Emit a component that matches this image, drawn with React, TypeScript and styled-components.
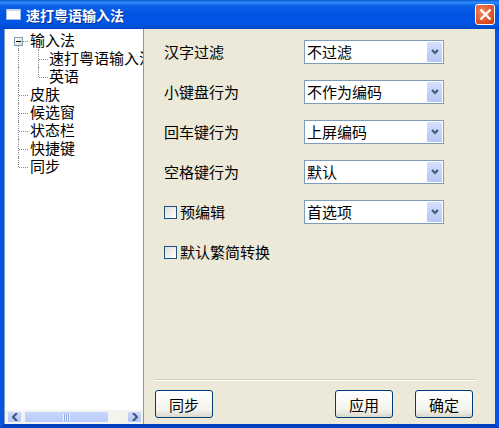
import styled, { createGlobalStyle } from "styled-components";

const GlobalStyle = createGlobalStyle`
    html, body {
        margin: 0;
        padding: 0;
        background: #fff;
    }
    * {
        box-sizing: border-box;
    }
`;

const FONT = `"Noto Sans CJK SC", "Liberation Sans", sans-serif`;

const treeItems = [
    { label: "输入法", level: 0, expander: true, last: false },
    { label: "速打粤语输入法", level: 1, last: false },
    { label: "英语", level: 1, last: true },
    { label: "皮肤", level: 0, last: false },
    { label: "候选窗", level: 0, last: false },
    { label: "状态栏", level: 0, last: false },
    { label: "快捷键", level: 0, last: false },
    { label: "同步", level: 0, last: true },
];

const selectRows = [
    { label: "汉字过滤", value: "不过滤" },
    { label: "小键盘行为", value: "不作为编码" },
    { label: "回车键行为", value: "上屏编码" },
    { label: "空格键行为", value: "默认" },
    { label: "预编辑", value: "首选项", check: true },
];

const Chevron = ({ dir }: { dir: "down" | "left" | "right" }) => {
    const points = {
        down: "1,1 4,4 7,1",
        left: "5,0 1,4 5,8",
        right: "1,0 5,4 1,8",
    }[dir];
    const size = dir === "down" ? { width: 8, height: 6 } : { width: 6, height: 8 };
    return (
        <svg {...size} viewBox={`0 0 ${size.width} ${size.height}`}>
            <polyline points={points} fill="none" stroke="#45587e" strokeWidth="2.2" />
        </svg>
    );
};

const App = () => {
    return (
        <>
            <GlobalStyle />
            <Window>
                <TitleBar>
                    <TitleIcon />
                    <TitleText>速打粤语输入法</TitleText>
                    <CloseButton aria-label="close">
                        <svg width="13" height="13" viewBox="0 0 13 13">
                            <path d="M1.5 1.5 L11.5 11.5 M11.5 1.5 L1.5 11.5" stroke="#fff" strokeWidth="2.4" />
                        </svg>
                    </CloseButton>
                </TitleBar>
                <Body>
                    <TreePane>
                        <TreeList>
                            {treeItems.map((item, i) => (
                                <TreeRow key={item.label} $level={item.level}>
                                    {/* 주 세로선: 첫 행은 가운데부터, 마지막 행은 가운데까지 */}
                                    <VLine
                                        $left={13}
                                        $top={i === 0 ? 10 : 0}
                                        $height={i === 0 ? 8 : item.level === 0 && item.last ? 10 : 18}
                                    />
                                    {item.level === 1 && (
                                        <VLine $left={33} $top={0} $height={item.last ? 10 : 18} />
                                    )}
                                    <HLine $left={item.level === 1 ? 34 : 14} />
                                    {item.expander && <Expander />}
                                    <TreeLabel>{item.label}</TreeLabel>
                                </TreeRow>
                            ))}
                        </TreeList>
                        <ScrollBar>
                            <ScrollButton>
                                <Chevron dir="left" />
                            </ScrollButton>
                            <ScrollThumb>
                                <Grip />
                            </ScrollThumb>
                            <ScrollTrack />
                            <ScrollButton>
                                <Chevron dir="right" />
                            </ScrollButton>
                        </ScrollBar>
                    </TreePane>
                    <Panel>
                        <Form>
                            {selectRows.map((row) => (
                                <FormRow key={row.label}>
                                    {row.check ? (
                                        <CheckLabel>
                                            <CheckBox />
                                            {row.label}
                                        </CheckLabel>
                                    ) : (
                                        <FieldLabel>{row.label}</FieldLabel>
                                    )}
                                    <Select>
                                        <SelectValue>{row.value}</SelectValue>
                                        <SelectArrow>
                                            <Chevron dir="down" />
                                        </SelectArrow>
                                    </Select>
                                </FormRow>
                            ))}
                            <FormRow>
                                <CheckLabel>
                                    <CheckBox />
                                    默认繁简转换
                                </CheckLabel>
                            </FormRow>
                        </Form>
                        <Footer>
                            <Button>同步</Button>
                            <FooterRight>
                                <Button>应用</Button>
                                <Button>确定</Button>
                            </FooterRight>
                        </Footer>
                    </Panel>
                </Body>
            </Window>
        </>
    );
};

// --- Styled Components ---

const Window = styled.div`
    display: flex;
    flex-direction: column;
    width: 499px;
    height: 428px;
    font-family: ${FONT};
    font-size: 15px;
    color: #000;
    overflow: hidden;
`;

const TitleBar = styled.div`
    display: flex;
    align-items: center;
    height: 29px;
    padding: 0 4px 0 6px;
    background: linear-gradient(
        180deg,
        #0a56d8 0%,
        #2f8cf8 8%,
        #0a62e8 20%,
        #0054e3 50%,
        #0056e6 80%,
        #0048c8 100%
    );
`;

const TitleIcon = styled.div`
    width: 15px;
    height: 11px;
    background: #fff;
    border: 1px solid #9db8ea;
    border-top: 2px solid #c9d9f6;
    border-radius: 1px;
`;

const TitleText = styled.span`
    flex: 1;
    margin-left: 5px;
    font-size: 14px;
    font-weight: 700;
    color: #fff;
    text-shadow: 1px 1px 0 #0a2f8f;
`;

const CloseButton = styled.div`
    display: flex;
    align-items: center;
    justify-content: center;
    width: 20px;
    height: 21px;
    border: 1px solid #fff;
    border-radius: 3px;
    background: radial-gradient(circle at 35% 35%, #ef8a5e 0%, #e2562f 55%, #c63a12 100%);
`;

const Body = styled.div`
    flex: 1;
    display: flex;
    min-height: 0;
    background: #ece9d8;
    border-left: 4px solid #0753e0;
    border-right: 4px solid #0753e0;
    border-bottom: 4px solid #0340c0;
`;

const TreePane = styled.div`
    display: flex;
    flex-direction: column;
    width: 140px;
    background: #fff;
    border-right: 1px solid #7f9db9;
    border-left: 1px solid #7f9db9;
`;

const TreeList = styled.div`
    flex: 1;
    padding-top: 2px;
    overflow: hidden;
`;

const TreeRow = styled.div<{ $level: number }>`
    position: relative;
    display: flex;
    align-items: center;
    height: 18px;
    padding-left: ${(p) => (p.$level === 1 ? 44 : 25)}px;
    white-space: nowrap;
`;

const VLine = styled.span<{ $left: number; $top: number; $height: number }>`
    position: absolute;
    left: ${(p) => p.$left}px;
    top: ${(p) => p.$top}px;
    height: ${(p) => p.$height}px;
    border-left: 1px dotted #8c8c8c;
`;

const HLine = styled.span<{ $left: number }>`
    position: absolute;
    left: ${(p) => p.$left}px;
    top: 10px;
    width: 9px;
    border-top: 1px dotted #8c8c8c;
`;

const Expander = styled.span`
    position: absolute;
    left: 9px;
    top: 6px;
    width: 9px;
    height: 9px;
    border: 1px solid #7f9db9;
    background: linear-gradient(135deg, #fff, #d8d4c8);
    &::after {
        content: "";
        position: absolute;
        left: 1px;
        right: 1px;
        top: 3px;
        height: 1px;
        background: #000;
    }
`;

const TreeLabel = styled.span`
    line-height: 18px;
`;

const ScrollBar = styled.div`
    display: flex;
    height: 14px;
    padding: 1px 1px 1px 2px;
    gap: 2px;
    background: #f4f3ec;
`;

const ScrollButton = styled.div`
    display: flex;
    align-items: center;
    justify-content: center;
    width: 15px;
    background: linear-gradient(180deg, #cbd9fb, #b4c7f6);
    border-radius: 2px;
    border: 1px solid #eef2fd;
`;

const ScrollThumb = styled.div`
    display: flex;
    align-items: center;
    justify-content: center;
    width: 85px;
    background: linear-gradient(180deg, #c8d6fb, #b8cbf8);
    border: 1px solid #eef2fd;
    border-radius: 2px;
`;

const Grip = styled.span`
    width: 7px;
    height: 7px;
    background: repeating-linear-gradient(90deg, #eef2fd 0 1px, #8ca5dc 1px 2px);
`;

const ScrollTrack = styled.div`
    flex: 1;
`;

const Panel = styled.div`
    flex: 1;
    display: flex;
    flex-direction: column;
    padding: 11px 19px 7px 10px;
`;

const Form = styled.div`
    flex: 1;
    display: flex;
    flex-direction: column;
    gap: 16px;
    padding-left: 10px;
`;

const FormRow = styled.div`
    display: flex;
    align-items: center;
    justify-content: space-between;
    height: 24px;
    padding-right: 32px;
`;

const FieldLabel = styled.span`
    line-height: 24px;
`;

const CheckLabel = styled.label`
    display: flex;
    align-items: center;
    line-height: 24px;
`;

const CheckBox = styled.span`
    width: 13px;
    height: 13px;
    border: 1px solid #1c5180;
    background: linear-gradient(135deg, #dcdcd7, #fff);
    margin-right: 3px;
`;

const Select = styled.div`
    display: flex;
    align-items: stretch;
    width: 140px;
    height: 24px;
    padding: 1px;
    background: #fff;
    border: 1px solid #7f9db9;
`;

const SelectValue = styled.span`
    flex: 1;
    padding-left: 1px;
    line-height: 19px;
`;

const SelectArrow = styled.span`
    display: flex;
    align-items: center;
    justify-content: center;
    width: 15px;
    background: linear-gradient(180deg, #d4dffb, #b4c7f6);
    border-radius: 1px;
`;

const Footer = styled.div`
    display: flex;
    justify-content: space-between;
    height: 38px;
    padding: 10px 3px 0 1px;
    border-top: 1px solid #d0cdb8;
    box-shadow: inset 0 1px 0 #fff;
`;

const FooterRight = styled.div`
    display: flex;
    gap: 22px;
`;

const Button = styled.div`
    display: flex;
    align-items: center;
    justify-content: center;
    width: 58px;
    height: 28px;
    font-size: 15px;
    border: 1px solid #003c74;
    border-radius: 3px;
    background: linear-gradient(180deg, #fff 0%, #f4f4ee 70%, #dcd8cc 100%);
`;

export default App;
